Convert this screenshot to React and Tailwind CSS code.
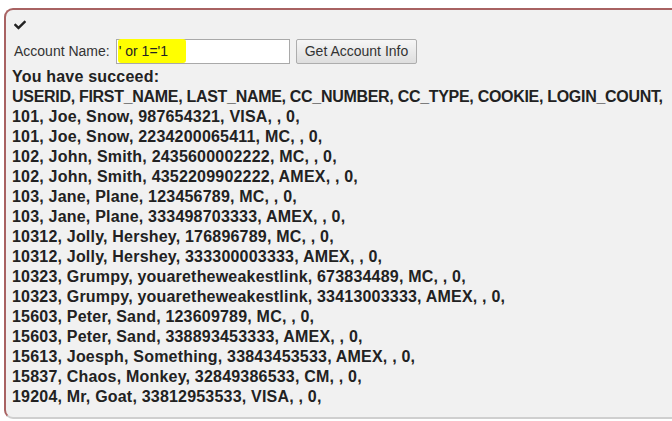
import React from 'react';

const header = 'USERID, FIRST_NAME, LAST_NAME, CC_NUMBER, CC_TYPE, COOKIE, LOGIN_COUNT,';

const rows = [
  '101, Joe, Snow, 987654321, VISA, , 0,',
  '101, Joe, Snow, 2234200065411, MC, , 0,',
  '102, John, Smith, 2435600002222, MC, , 0,',
  '102, John, Smith, 4352209902222, AMEX, , 0,',
  '103, Jane, Plane, 123456789, MC, , 0,',
  '103, Jane, Plane, 333498703333, AMEX, , 0,',
  '10312, Jolly, Hershey, 176896789, MC, , 0,',
  '10312, Jolly, Hershey, 333300003333, AMEX, , 0,',
  '10323, Grumpy, youaretheweakestlink, 673834489, MC, , 0,',
  '10323, Grumpy, youaretheweakestlink, 33413003333, AMEX, , 0,',
  '15603, Peter, Sand, 123609789, MC, , 0,',
  '15603, Peter, Sand, 338893453333, AMEX, , 0,',
  '15613, Joesph, Something, 33843453533, AMEX, , 0,',
  '15837, Chaos, Monkey, 32849386533, CM, , 0,',
  '19204, Mr, Goat, 33812953533, VISA, , 0,',
];

function CheckIcon() {
  return (
    <svg viewBox="0 0 512 512" className="w-[14px] h-[12px]" fill="#222">
      <path d="M173.9 439.4l-166.4-166.4c-10-10-10-26.2 0-36.2l36.2-36.2c10-10 26.2-10 36.2 0L192 312.7 432.1 72.6c10-10 26.2-10 36.2 0l36.2 36.2c10 10 10 26.2 0 36.2L210.1 439.4c-10 10-26.2 10-36.2 0z" />
    </svg>
  );
}

export default function App() {
  return (
    <div className="bg-white w-[672px] h-[421px] overflow-hidden pt-[8px] pl-[4px] font-['Liberation_Sans',Arial,sans-serif]">
      <div className="w-[700px] h-[411px] bg-[#f1f1f1] border-l-2 border-t-2 border-b-2 border-l-[#a86262] border-t-[#a86262] border-b-[#cfcfcf] rounded-l-[9px] pl-[6px] pt-[6px]">
        <div className="h-[14px] flex items-center pl-[1px] mt-[2px]">
          <CheckIcon />
        </div>
        <div className="flex items-center mt-[6px] h-[26px]">
          <span className="text-[14px] text-[#333] ml-[2px]">Account Name:</span>
          <div className="ml-[6px] w-[174px] h-[25px] bg-white border border-[#a9a9a9] flex items-center relative">
            <div className="absolute left-[1px] top-[-1px] w-[68px] h-[24px] bg-[#ffff00] rounded-[3px]" />
            <span className="relative text-[14px] text-[#222] pl-[2px]">' or 1='1</span>
          </div>
          <button className="ml-[6px] h-[25px] px-[8px] text-[14px] text-[#333] border border-[#adadad] rounded-[2px] bg-gradient-to-b from-[#f6f6f6] to-[#dedede]">
            Get Account Info
          </button>
        </div>
        <div className="mt-[3px] text-[16px] font-bold leading-[20px] text-[#222] tracking-[0.2px]">
          <div>You have succeed:</div>
          <div className="whitespace-nowrap tracking-[-0.3px]">{header}</div>
          {rows.map((r, i) => (
            <div key={i} className="whitespace-nowrap">{r}</div>
          ))}
        </div>
      </div>
    </div>
  );
}
